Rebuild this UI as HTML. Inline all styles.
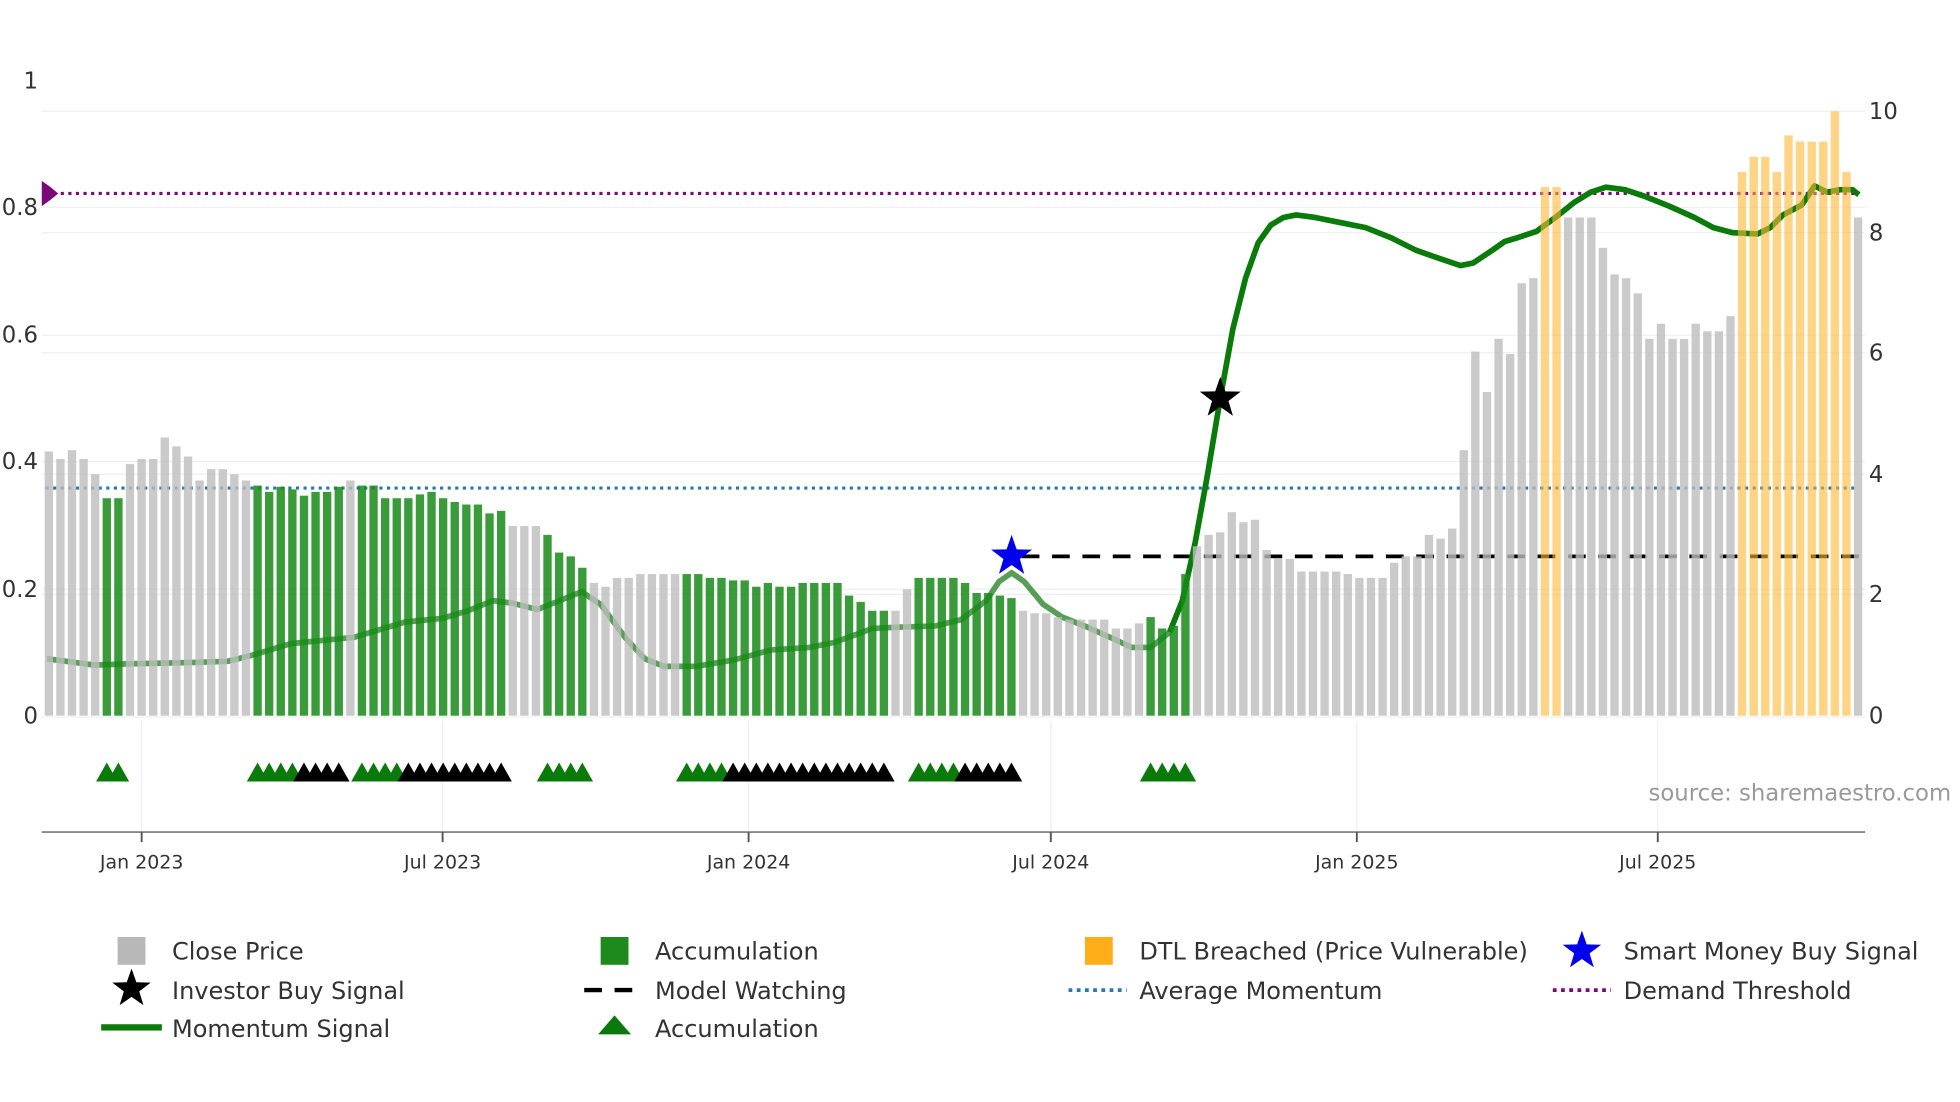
<!DOCTYPE html>
<html><head><meta charset="utf-8"><style>
html,body{margin:0;padding:0;background:#fff;}
svg{display:block}
text{font-family:"DejaVu Sans","Liberation Sans",sans-serif;fill:#333}
</style></head><body>
<svg id="s" width="1960" height="1102" viewBox="0 0 1550 871.5" xmlns="http://www.w3.org/2000/svg">
<g stroke="#eef0f3" stroke-width="1">
<line x1="33" y1="88" x2="1475" y2="88"/>
<line x1="33" y1="164" x2="1475" y2="164"/>
<line x1="33" y1="184" x2="1475" y2="184"/>
<line x1="33" y1="265" x2="1475" y2="265"/>
<line x1="33" y1="279" x2="1475" y2="279"/>
<line x1="33" y1="365" x2="1475" y2="365"/>
<line x1="33" y1="375" x2="1475" y2="375"/>
<line x1="33" y1="466" x2="1475" y2="466"/>
<line x1="33" y1="470" x2="1475" y2="470"/>
<line x1="33" y1="567" x2="1475" y2="567"/>
<line x1="112" y1="570" x2="112" y2="658"/>
<line x1="350" y1="570" x2="350" y2="658"/>
<line x1="592" y1="570" x2="592" y2="658"/>
<line x1="831" y1="570" x2="831" y2="658"/>
<line x1="1073" y1="570" x2="1073" y2="658"/>
<line x1="1311" y1="570" x2="1311" y2="658"/>
</g>
<line x1="36" y1="153" x2="1470" y2="153" stroke="#7a0a7a" stroke-width="2.5" stroke-dasharray="2.5,3.5"/>
<line x1="36" y1="386" x2="1470" y2="386" stroke="#2a78b0" stroke-width="2.5" stroke-dasharray="2.5,3.5"/>
<line x1="808" y1="440" x2="1470" y2="440" stroke="#000" stroke-width="3" stroke-dasharray="14,10"/>
<polyline id="m1" fill="none" stroke="#1f7f1f" stroke-opacity="0.75" stroke-width="4.5" stroke-linejoin="round"/>
<polyline id="m2" fill="none" stroke="#0a7a0a" stroke-width="4.5" stroke-linejoin="round"/>
<g id="bars"></g>
<g id="tris"></g>
<path d="M33,143 L40,148 L46,153 L40,158 L33,163 Z" fill="#7a0a7a"/>
<line x1="33" y1="658" x2="1475" y2="658" stroke="#888" stroke-width="1.5"/>
<g stroke="#555" stroke-width="1.5">
<line x1="112" y1="658" x2="112" y2="666"/><line x1="350" y1="658" x2="350" y2="666"/>
<line x1="592" y1="658" x2="592" y2="666"/><line x1="831" y1="658" x2="831" y2="666"/>
<line x1="1073" y1="658" x2="1073" y2="666"/><line x1="1311" y1="658" x2="1311" y2="666"/>
</g>
<g font-size="15" text-anchor="middle">
<text x="112" y="687">Jan 2023</text><text x="350" y="687">Jul 2023</text>
<text x="592" y="687">Jan 2024</text><text x="831" y="687">Jul 2024</text>
<text x="1073" y="687">Jan 2025</text><text x="1311" y="687">Jul 2025</text>
</g>
<g font-size="18" text-anchor="end">
<text x="30" y="70">1</text><text x="30" y="170">0.8</text><text x="30" y="271">0.6</text>
<text x="30" y="371">0.4</text><text x="30" y="472">0.2</text><text x="30" y="572">0</text>
</g>
<g font-size="18">
<text x="1478" y="94">10</text><text x="1478" y="190">8</text><text x="1478" y="285">6</text>
<text x="1478" y="381">4</text><text x="1478" y="476">2</text><text x="1478" y="572">0</text>
</g>
<text x="1543" y="633" font-size="18" text-anchor="end" style="fill:#999">source: sharemaestro.com</text>
<g id="stars"></g>
<g font-size="19">
<rect x="93" y="741" width="22" height="22" fill="#b8b8b8"/><text x="136" y="759">Close Price</text>
<text x="136" y="790">Investor Buy Signal</text>
<rect x="80" y="810" width="48" height="5" fill="#0a7a0a"/><text x="136" y="820">Momentum Signal</text>
<rect x="475" y="741" width="22" height="22" fill="#1e8a1e"/><text x="518" y="759">Accumulation</text>
<line x1="462" y1="783" x2="508" y2="783" stroke="#000" stroke-width="3.5" stroke-dasharray="14,10"/><text x="518" y="790">Model Watching</text>
<path d="M486,803 L499,818 L473,818 Z" fill="#0a7a0a"/><text x="518" y="820">Accumulation</text>
<rect x="858" y="741" width="22" height="22" fill="#ffae1a"/><text x="901" y="759">DTL Breached (Price Vulnerable)</text>
<line x1="845" y1="783" x2="891" y2="783" stroke="#2a78b0" stroke-width="3" stroke-dasharray="3,3.5"/><text x="901" y="790">Average Momentum</text>
<text x="1284" y="759">Smart Money Buy Signal</text>
<line x1="1228" y1="783" x2="1274" y2="783" stroke="#7a0a7a" stroke-width="3" stroke-dasharray="3,3.5"/><text x="1284" y="790">Demand Threshold</text>
</g>
</svg>
<script>
var NS="http://www.w3.org/2000/svg";
var groups=[
['g',[357,363,356,363,375]],['a',[394,394]],
['g',[367,363,363,346,353,361,380,371,371,375,380]],
['a',[384,389,385,387,392,389,389,385]],['g',[380]],
['a',[384,384,394,394,394,391,389,394,397,399,399,406,404]],
['g',[416,416,416]],['a',[423,437,440,449]],
['g',[461,464,457,457,454,454,454,454]],
['a',[454,454,457,457,459,459,464,461,464,464,461,461,461,461,471,476,483,483]],
['g',[483,466]],['a',[457,457,457,457,461,469,469,471,473]],
['g',[483,485,485,488,490,490,490,490,497,497,493]],
['a',[488,497,495,454]],
['g',[432,423,421,405,413,411,435,442,442,452,452,452,452,454,457,457,457,445,440,440,423,426,418,356,278,310,268,280,224,220]],
['o',[148,148]],
['g',[172,172,172,196,217,220,232,268,256,268,268,256,262,262,250]],
['o',[136,124,124,136,107,112,112,112,88,136]],['g',[172]]];
var col={g:['#bdbdbd',0.8],a:['#168a16',0.85],o:['#ffb833',0.6]};
var bars=document.getElementById('bars'),tris=document.getElementById('tris');
var N=157,x0=34,step=(1474-34)/N,w=6.6,i=0;
var accRun=0;
groups.forEach(function(g){
 var t=g[0];var run=0;
 g[1].forEach(function(top){
  var x=x0+i*step+(step-w)/2;
  var r=document.createElementNS(NS,'rect');
  r.setAttribute('x',x);r.setAttribute('y',top);r.setAttribute('width',w);r.setAttribute('height',566-top);
  r.setAttribute('fill',col[t][0]);r.setAttribute('fill-opacity',col[t][1]);bars.appendChild(r);
  if(t=='a'){
   var cx=x+w/2;var c=run<4?'#0a7a0a':'#000';
   var p=document.createElementNS(NS,'path');
   p.setAttribute('d','M'+cx+',603 L'+(cx+8.5)+',618 L'+(cx-8.5)+',618 Z');p.setAttribute('fill',c);tris.appendChild(p);
   run++;
  }
  i++;
 });
});
var pts=[[37,521],[60,524],[75,526],[100,525],[150,524],[180,523],[200,518],[230,509],[260,506],[280,504],[300,498],[320,492],[350,489],[370,483],[390,475],[405,477],[425,482],[440,476],[460,468],[475,478],[495,505],[510,521],[525,527],[550,527],[580,522],[610,514],[640,512],[660,508],[690,497],[710,496],[740,495],[760,490],[780,475],[790,460],[800,453],[810,460],[825,478],[840,488],[860,496],[880,505],[895,512],[910,512],[925,500],[935,475],[945,430],[955,375],[965,315],[975,260],[985,220],[995,192],[1005,178],[1015,172],[1025,170],[1040,172],[1060,176],[1080,180],[1100,188],[1120,198],[1140,205],[1155,210],[1165,208],[1180,198],[1190,191],[1200,188],[1215,183],[1230,172],[1245,160],[1258,152],[1270,148],[1285,150],[1300,155],[1320,163],[1340,172],[1355,180],[1370,184],[1390,185],[1400,180],[1410,170],[1425,162],[1435,147],[1445,152],[1455,150],[1465,150],[1470,154]];
var a=[],b=[];pts.forEach(function(p){if(p[0]<=925)a.push(p.join(','));if(p[0]>=925)b.push(p.join(','));});
document.getElementById('m1').setAttribute('points',a.join(' '));
document.getElementById('m2').setAttribute('points',b.join(' '));
function star(cx,cy,R,fill){var r=R*0.4,s='';for(var k=0;k<10;k++){var rr=k%2?r:R;var an=-Math.PI/2+k*Math.PI/5;s+=(k?'L':'M')+(cx+rr*Math.cos(an)).toFixed(1)+','+(cy+rr*Math.sin(an)).toFixed(1);}
 var p=document.createElementNS(NS,'path');p.setAttribute('d',s+'Z');p.setAttribute('fill',fill);document.getElementById('stars').appendChild(p);}
star(965,315,17,'#000');star(800,440,17,'#0000ee');star(104,782,16,'#000');star(1251,752,16,'#0000ee');
</script>
</body></html>
